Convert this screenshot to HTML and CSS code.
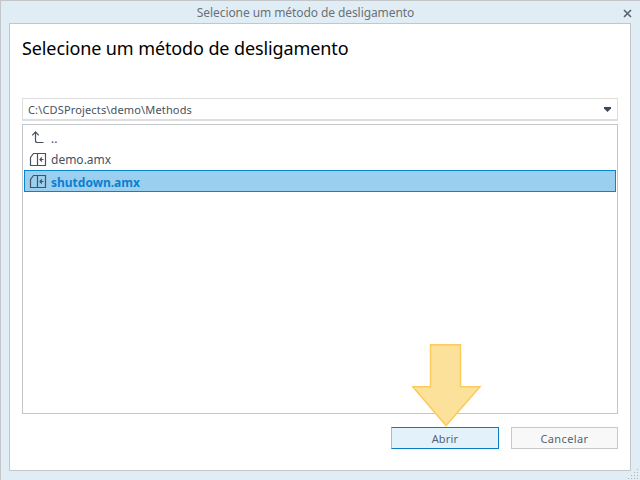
FILE: index.html
```html
<!DOCTYPE html>
<html lang="pt">
<head>
<meta charset="utf-8">
<title>Selecione um método de desligamento</title>
<link rel="stylesheet" href="styles.css">
</head>
<body>
<div class="window">
  <div class="titlebar">
    <span class="title">Selecione um método de desligamento</span>
    <svg class="close" width="9" height="9" viewBox="0 0 9 9"><path d="M1 1l7 7M8 1L1 8" stroke="#56626e" stroke-width="1.6" fill="none"/></svg>
  </div>
  <div class="panel">
    <h1 class="heading">Selecione um método de desligamento</h1>
    <div class="combo">
      <span>C:\CDSProjects\demo\Methods</span>
      <svg class="caret" width="7" height="5" viewBox="0 0 7 5"><path d="M0 0h7v1.500L3.500 5 0 1.500z" fill="#3c4a58"/></svg>
    </div>
    <div class="list">
      <div class="row">
        <svg class="icon" width="18" height="17" viewBox="0 0 18 17"><path d="M6.500 3V11.500Q6.500 13.500 8.500 13.500H14.500M3.300 6.300L6.500 2.800 9.700 6.300" stroke="#46525e" stroke-width="1.200" fill="none"/></svg>
        <span class="label">..</span>
      </div>
      <div class="row">
        <svg class="icon" width="18" height="17" viewBox="0 0 18 17"><path d="M1.500 15.500V7.500L4.500 3.500H16.500V15.500ZM8.500 3.500V15.500M14.500 9.500H11M12.800 7.500L11 9.500 12.800 11.500" stroke="#46525e" stroke-width="1.200" fill="none"/></svg>
        <span class="label">demo.amx</span>
      </div>
      <div class="row selected">
        <svg class="icon" width="18" height="17" viewBox="0 0 18 17"><path d="M1.500 15.500V7.500L4.500 3.500H16.500V15.500ZM8.500 3.500V15.500M14.500 9.500H11M12.800 7.500L11 9.500 12.800 11.500" stroke="#46525e" stroke-width="1.200" fill="none"/></svg>
        <span class="label">shutdown.amx</span>
      </div>
    </div>
    <div class="actions">
      <button class="btn primary">Abrir</button>
      <button class="btn">Cancelar</button>
    </div>
  </div>
  <svg class="arrow" width="70" height="84" viewBox="0 0 70 84"><path d="M18.500 0.750H48.500V42.750H68L34 81.500 0.750 42.750H18.500Z" fill="#fbe199" stroke="#fdcb5c" stroke-width="1.500"/></svg>
  <svg class="grip" width="12" height="12" viewBox="0 0 12 12"><path d="M9 1h1v1H9zM6 4h1v1H6zM9 4h1v1H9zM3 7h1v1H3zM6 7h1v1H6zM9 7h1v1H9zM0 10h1v1H0zM3 10h1v1H3zM6 10h1v1H6zM9 10h1v1H9z" fill="#a9b4bb"/></svg>
</div>
</body>
</html>
```
FILE: styles.css
```css
html, body {
  margin: 0;
  padding: 0;
}
body {
  width: 640px;
  height: 480px;
  overflow: hidden;
  font-family: "Noto Sans", "Open Sans", sans-serif;
}
.window {
  position: relative;
  box-sizing: border-box;
  width: 640px;
  height: 480px;
  display: flex;
  flex-direction: column;
  padding: 0 9px 9px;
  background: #e1edf5;
  border: 1px solid #c3c7c9;
  border-bottom: 0;
  border-right: 0;
}
.titlebar {
  height: 22px;
  flex: none;
  display: flex;
  align-items: center;
  justify-content: center;
  position: relative;
  padding-right: 30px;
}
.title {
  font-size: 12px;
  letter-spacing: -0.08px;
  color: #6a7177;
}
.close {
  position: absolute;
  right: -1px;
  top: 8px;
}
.panel {
  flex: 1;
  display: flex;
  flex-direction: column;
  min-height: 0;
  background: #fff;
  border: 1px solid #c3c7c9;
  padding: 0 12px 21px;
  margin-left: -1px;
}
.heading {
  margin: 11px 0 0;
  height: 63px;
  font-size: 18px;
  line-height: 26px;
  letter-spacing: -0.11px;
  font-weight: 400;
  color: #000;
}
.combo {
  box-sizing: border-box;
  height: 23px;
  flex: none;
  display: flex;
  align-items: center;
  justify-content: space-between;
  padding: 0 6px 0 5px;
  border: 1px solid #dedede;
  border-bottom-width: 2px;
  font-size: 11px;
  letter-spacing: 0.15px;
  color: #46525e;
}
.list {
  flex: 1;
  margin-top: 3px;
  padding: 2px 1px;
  border: 1px solid #c3c7c9;
  min-height: 0;
}
.row {
  box-sizing: border-box;
  height: 21px;
  display: flex;
  align-items: center;
  border: 1px solid transparent;
  padding-left: 4px;
  font-size: 12px;
  color: #46525e;
}
.icon {
  flex: none;
  margin-right: 4px;
}
.label {
  padding-top: 2px;
}
.selected {
  height: 22px;
  background: #9bcfef;
  border-color: #0a84cc;
  color: #0a7fd0;
  font-weight: 700;
  margin-top: 1px;
}
.selected .icon {
  margin-bottom: 1px;
}
.actions {
  display: flex;
  justify-content: flex-end;
  gap: 12px;
  margin-top: 13px;
  flex: none;
}
.btn {
  box-sizing: border-box;
  width: 107px;
  height: 22px;
  padding: 0;
  font-family: inherit;
  font-size: 11px;
  color: #56626e;
  letter-spacing: 0.4px;
  background: #f8f8f8;
  border: 1px solid #c9c9c9;
}
.primary {
  width: 108px;
  letter-spacing: 0.2px;
  background: #e3f2fa;
  border-color: #0a7cc0;
  border-left-color: #8ac4e8;
}
.arrow {
  position: absolute;
  left: 411px;
  top: 343px;
}
.grip {
  position: absolute;
  right: 0;
  bottom: 0;
}
```
